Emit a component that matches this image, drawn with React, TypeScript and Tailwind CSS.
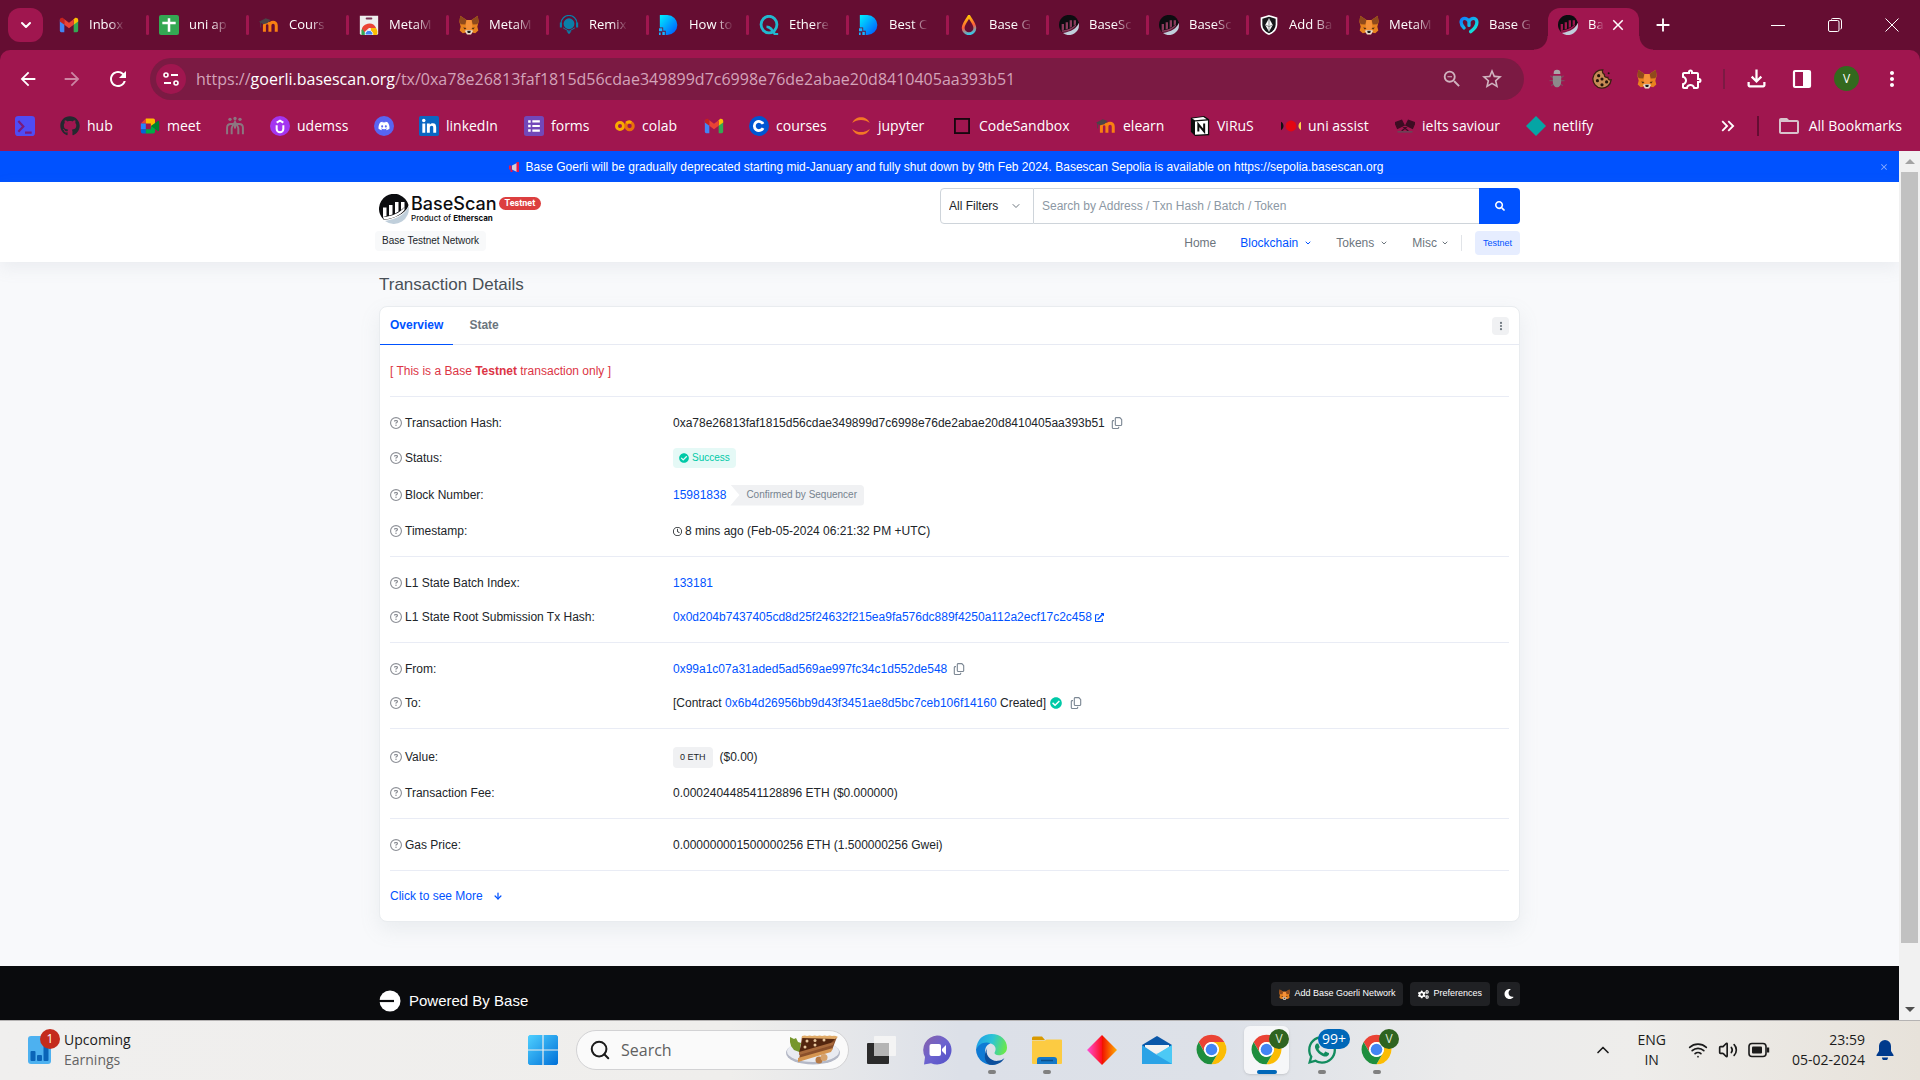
import type { ReactNode } from "react";
import { FaGithub, FaDiscord, FaCheckCircle, FaSearch, FaMoon, FaCogs, FaExternalLinkAlt, FaWhatsapp } from "react-icons/fa";
import { FaRegCircleQuestion, FaRegClock, FaRegCopy, FaEllipsisVertical } from "react-icons/fa6";
import { MdArrowBack, MdArrowForward, MdRefresh, MdStarBorder, MdOutlineExtension, MdMoreVert, MdOutlineFileDownload, MdZoomOut, MdKeyboardDoubleArrowRight, MdClose, MdAdd, MdFolderOpen } from "react-icons/md";
import { ArrowDown, ChevronDown, ChevronUp, Search, Wifi, Volume2 } from "lucide-react";

/* ---------- Logos ---------- */

function Svg({ children, box = "0 0 24 24", className = "size-5" }: { children: ReactNode; box?: string; className?: string }) {
  return (
    <svg viewBox={box} className={`shrink-0 ${className}`} fill="none" aria-hidden="true">
      {children}
    </svg>
  );
}

function Gmail() {
  return (
    <Svg className="size-5">
      <path d="M1 5.5V19a1.6 1.6 0 0 0 1.6 1.6H6.4V10.5z" fill="#4285f4" />
      <path d="M23 5.5V19a1.6 1.6 0 0 1-1.6 1.6h-3.8V10.5z" fill="#34a853" />
      <path d="M17.6 5.2v6.6L23 7.7V5.9c0-2.2-2.500-3.400-4.200-2.100z" fill="#fbbc04" />
      <path d="M1 5.900v1.800l5.400 4.100V5.200L5.200 3.800C3.500 2.500 1 3.700 1 5.900z" fill="#c5221f" />
      <path d="M6.400 11.800V5.200L12 9.400l5.600-4.200v6.600L12 16z" fill="#ea4335" />
    </Svg>
  );
}

function Sheets() {
  return (
    <Svg>
      <rect x="0" y="0" width="24" height="24" rx="2.500" fill="#34a853" />
      <path d="M12 4v16M4 9.500h16" stroke="#fff" strokeWidth="3" />
    </Svg>
  );
}

function Moodle() {
  return (
    <Svg>
      <path d="M6.500 20v-7.500a3.300 3.300 0 0 1 6.600 0V20M13.100 20v-7.500a3.800 3.800 0 0 1 7.600 0V20" stroke="#f98012" strokeWidth="3.600" />
      <path d="M0 8l8-4 6 2-4 4-5 1z" fill="#4b4448" />
      <path d="M2 8v7" stroke="#4b4448" />
    </Svg>
  );
}

function Chrome({ className = "size-5" }: { className?: string }) {
  return (
    <Svg className={className}>
      <circle cx="12" cy="12" r="11.500" fill="#fff" />
      <path d="M2.040 6.250A11.500 11.500 0 0 1 21.960 6.250H12A5.750 5.750 0 0 0 7.020 14.880z" fill="#ea4335" />
      <path d="M21.960 6.250A11.500 11.500 0 0 1 12 23.500L16.980 14.880A5.750 5.750 0 0 0 12 6.250z" fill="#fbbc04" />
      <path d="M12 23.500A11.500 11.500 0 0 1 2.040 6.250L7.020 14.880A5.750 5.750 0 0 0 16.980 14.880z" fill="#1e8e3e" />
      <circle cx="12" cy="12" r="5.600" fill="#fff" />
      <circle cx="12" cy="12" r="4.500" fill="#4285f4" />
    </Svg>
  );
}

function WebStore() {
  return (
    <Svg>
      <path d="M1 1h22v21a2 2 0 0 1-2 2H3a2 2 0 0 1-2-2z" fill="#eee" />
      <rect x="8" y="3" width="8" height="2.500" rx="1.200" fill="#7b3354" />
      <path d="M3 19a9.200 9.200 0 0 1 17.500-3.500H12L6 21z" fill="#ea4335" />
      <path d="M3 23a9 9 0 0 1 .8-6.500L9 24H3z" fill="#34a853" />
      <path d="M20.500 15.500a9 9 0 0 1 .8 8.500H15l-1-8.500z" fill="#fbbc04" />
      <path d="M7.500 24a4.600 4.600 0 1 1 9 0z" fill="#4285f4" stroke="#fff" />
    </Svg>
  );
}

function Fox({ className = "size-5" }: { className?: string }) {
  return (
    <Svg className={className}>
      <path d="M1.500 1l7.500 5h6l7.500-5 1 7-1.500 6 1.200 4.500-3.700 3.500-4-1-1.500 2h-4l-1.500-2-4 1-3.700-3.500L2 14 .5 8z" fill="#e8821e" />
      <path d="M1.500 1l7.500 5-1.500 5.500L2 11 .5 8zM22.500 1L15 6l1.500 5.500L22 11l1.500-3z" fill="#8f4a1c" />
      <path d="M9 6h6l1 8-1 5H9l-1-5z" fill="#f6923a" />
      <path d="M5 15l4 .5-2 2zM19 15l-4 .500 2 2z" fill="#4a2a14" />
      <path d="M7 19l3-1h4l3 1-2.500 4.500h-5z" fill="#e9dccf" />
      <path d="M9.800 19h4.400l-.7 2.500h-3z" fill="#1b1b1b" />
    </Svg>
  );
}

function Remix() {
  return (
    <Svg>
      <circle cx="12" cy="10.500" r="6.500" fill="#0a7ea8" />
      <path d="M2.500 14v-4a9.500 9.500 0 0 1 19 0v4" stroke="#0a7ea8" strokeWidth="1.400" />
      <path d="M1 9h2.500v6H1zM20.500 9H23v6h-2.500zM9 19.500h6L12 23z" fill="#0a7ea8" />
      <path d="M5 15.500l7 4 7-4" stroke="#0a7ea8" strokeWidth="1.200" />
    </Svg>
  );
}

function BrandD() {
  return (
    <Svg>
      <defs>
        <linearGradient id="brand-d" x1="0" y1="0" x2="1" y2="1">
          <stop offset="0" stopColor="#00f0ff" />
          <stop offset="1" stopColor="#0050ff" />
        </linearGradient>
      </defs>
      <path d="M1 0h9a12 12 0 0 1 0 24H8v-5H5v-4H1z" fill="url(#brand-d)" />
      <path d="M0 16h4v3.500H0zM4 20h3v4H4zM0 21h2v3H0z" fill="#19b4ff" />
    </Svg>
  );
}

function BrandQ() {
  return (
    <Svg>
      <ellipse cx="12" cy="11.500" rx="9.500" ry="10" stroke="#22b8cf" strokeWidth="3.400" />
      <path d="M9 14c5 0 7 4 10 9h4" stroke="#22b8cf" strokeWidth="3" />
    </Svg>
  );
}

function Drop() {
  return (
    <Svg>
      <defs>
        <linearGradient id="drop" x1="0.500" y1="0" x2="0.700" y2="1">
          <stop offset="0" stopColor="#ffc107" />
          <stop offset="0.550" stopColor="#ff5a3c" />
          <stop offset="1" stopColor="#35c7e8" />
        </linearGradient>
      </defs>
      <path d="M12 1.500c4 6.500 7 10 7 14a7 7 0 0 1-14 0c0-4 3-7.500 7-14z" stroke="url(#drop)" strokeWidth="3.400" />
    </Svg>
  );
}

function BaseScanMark({ className = "size-5", bar = "#fff", wave = "#c0cfdb" }: { className?: string; bar?: string; wave?: string }) {
  return (
    <Svg className={className} box="0 0 30 30">
      <path d="M5 26A15 15 0 1 1 29.500 11C29 16 20 24 5 26z" fill="#0c0d10" />
      <path d="M29.600 12A15 15 0 0 1 6 27C18 25 27 20 29.600 12z" fill={wave} />
      <path d="M4 23v-9.500h3.500V22zM10 21.500V11h3.500v9.500zM16 19.500V8h3.500v9.500zM22 16V8h3.500v5z" fill={bar} />
      <path d="M4 23c9-.5 17-4 21.500-10v3C21 21.500 13 25 5 25.500z" fill={bar} />
    </Svg>
  );
}

function Shield() {
  return (
    <Svg>
      <path d="M12 0l10 3v8c0 6-4 10.500-10 13C6 21.500 2 17 2 11V3z" fill="#fff" />
      <path d="M12 2l8 2.500V11c0 5-3 8.500-8 11-5-2.500-8-6-8-11V4.500z" fill="#17171a" />
      <path d="M12 4l4.500 8L12 20l-4.500-8z" fill="#fff" />
      <path d="M12 4v16M8 12l4 2 4-2" stroke="#777" />
    </Svg>
  );
}

function Heart() {
  return (
    <Svg>
      <defs>
        <linearGradient id="heart" x1="0" y1="0" x2="1" y2="1">
          <stop offset="0" stopColor="#0f7fff" />
          <stop offset="1" stopColor="#15f0d0" />
        </linearGradient>
      </defs>
      <path d="M6 15.500C2.500 12 2 9.500 2.800 7 4 3.200 9 2.800 12 7.500c3-4.700 8-4.300 9.200-.5 1.200 4.500-2.200 9-7.200 13M12 7.500v5" stroke="url(#heart)" strokeWidth="4" strokeLinecap="round" />
    </Svg>
  );
}

function Terminal() {
  return (
    <Svg>
      <rect width="24" height="24" rx="4" fill="#4f4cf5" />
      <path d="M4 6l6 6.500L4 19M12 20h8" stroke="#7a1a7c" strokeWidth="2.600" />
    </Svg>
  );
}

function Meet() {
  return (
    <Svg>
      <path d="M1 9l6-6v6z" fill="#ea4335" />
      <path d="M1 9h6v7H1z" fill="#2684fc" />
      <path d="M1 16h6v5H3a2 2 0 0 1-2-2z" fill="#0066da" />
      <path d="M7 3h9a2 2 0 0 1 2 2v5l-5 3V9H7z" fill="#ffba00" />
      <path d="M7 16h6v-3l5-3v9a2 2 0 0 1-2 2H7z" fill="#00ac47" />
      <path d="M13 12l8.500-6c.6-.5 1.500 0 1.500.800v10.400c0 .800-.900 1.300-1.500.800z" fill="#00832d" />
    </Svg>
  );
}

function People() {
  return (
    <Svg>
      <g fill="#8c7680">
        <circle cx="6" cy="4" r="2" />
        <circle cx="12" cy="3" r="2" />
        <circle cx="18" cy="4" r="2" />
      </g>
      <path d="M2.500 22v-8c0-3 2-4.500 4.500-4.500h10c2.500 0 4.500 1.500 4.500 4.500v8M8 22v-7c0-2 1.500-3 4-8 2.500 5 4 6 4 8v7M12 7v8" stroke="#8c7680" strokeWidth="2.400" />
    </Svg>
  );
}

function Udemy() {
  return (
    <Svg>
      <circle cx="12" cy="12" r="12" fill="#a435f0" />
      <path d="M8 11v4.500a4 4 0 0 0 8 0V11M8 8l4-2.500L16 8" stroke="#fff" strokeWidth="2.400" />
    </Svg>
  );
}

function Discord() {
  return (
    <span className="flex size-5 shrink-0 items-center justify-center rounded-full bg-[#5865f2] text-xs text-white">
      <FaDiscord />
    </span>
  );
}

function LinkedIn() {
  return (
    <Svg>
      <rect width="24" height="24" rx="2" fill="#0a66c2" />
      <path d="M4 9h3.500v11H4zM9.500 9H13v1.600c1-1.400 2.200-1.900 3.600-1.900 3 0 4 2 4 4.800V20h-3.500v-6c0-1.400-.5-2.300-1.800-2.300-1.500 0-2.300 1-2.300 2.500V20H9.500z" fill="#fff" />
      <circle cx="5.700" cy="5.500" r="2.100" fill="#fff" />
    </Svg>
  );
}

function Forms() {
  return (
    <Svg>
      <rect width="24" height="24" rx="3" fill="#7248b9" />
      <path d="M10 6.500h9M10 12h9M10 17.500h9" stroke="#fff" strokeWidth="2.600" />
      <path d="M5 6.500h3M5 12h3M5 17.500h3" stroke="#fff" strokeWidth="3" />
    </Svg>
  );
}

function Colab() {
  return (
    <Svg>
      <circle cx="6" cy="12" r="4.200" stroke="#f9ab00" strokeWidth="3.600" />
      <circle cx="17.500" cy="12" r="4.400" stroke="#e8710a" strokeWidth="3.600" />
      <path d="M13.500 8.500a5 5 0 0 1 6-.8" stroke="#f9ab00" strokeWidth="3.400" />
    </Svg>
  );
}

function Coursera() {
  return (
    <Svg>
      <circle cx="12" cy="12" r="12" fill="#0056d2" />
      <path d="M16.800 9.500a5.500 5.500 0 1 0 0 5" stroke="#fff" strokeWidth="3.400" />
    </Svg>
  );
}

function Jupyter() {
  return (
    <Svg>
      <path d="M1.500 8.500C5-1 19-1 22.500 8.500 17 3.500 7 3.500 1.500 8.500zM1.500 15.500C5 25 19 25 22.500 15.500 17 20.500 7 20.500 1.500 15.500z" fill="#f37726" />
    </Svg>
  );
}

function SquareOutline() {
  return (
    <Svg>
      <rect x="3.500" y="3.500" width="17" height="17" stroke="#16070e" strokeWidth="2.200" />
    </Svg>
  );
}

function Notion() {
  return (
    <Svg>
      <path d="M1 2l16-2 6 4v19L6 24l-5-5z" fill="#0d0d0d" />
      <path d="M2.500 3L16 1.300 20 4 6 5z" fill="#fff" />
      <path d="M6 6.500l15.500-1V21.500L6 22.500z" fill="#fff" />
      <path d="M10 18.500V10l7 8.500V9" stroke="#0d0d0d" strokeWidth="2.400" />
    </Svg>
  );
}

function UniAssist() {
  return (
    <Svg>
      <path d="M0 7c4 2 4 8 0 10z" fill="#111" />
      <circle cx="12" cy="12" r="6.500" fill="#e30613" />
      <path d="M24 7c-4 2-4 8 0 10z" fill="#ffd54a" />
    </Svg>
  );
}

function Flags() {
  return (
    <Svg>
      <path d="M0 8l8-3 3 6-8 4zM24 8l-8-3-3 6 8 4zM5 9l11 9M19 9L8 18" fill="#3d0d23" stroke="#3d0d23" strokeWidth="1.500" />
      <path d="M3 19h18" stroke="#6d4256" strokeWidth="2" />
    </Svg>
  );
}

function Netlify() {
  return (
    <Svg>
      <path d="M12 0l12 12-12 12L0 12z" fill="#05a5a5" />
    </Svg>
  );
}

function Bug() {
  return (
    <Svg>
      <path d="M4 8l4 3M20 8l-4 3M3 14h5M21 14h-5M5 20l4-3M19 20l-4-3" stroke="#7d4a61" strokeWidth="1.500" />
      <path d="M8 5a4 4 0 0 1 8 0v1H8z" fill="#a9a5a7" />
      <path d="M7 8h10v7c0 4-2 7-5 7s-5-3-5-7z" fill="#8d898b" />
    </Svg>
  );
}

function Cookie() {
  return (
    <Svg>
      <path d="M13 1a11 11 0 1 0 10 12c-2 .5-4-.5-4-3-3 .5-4.500-1-4-3.500C13 6 12 3.500 13 1z" fill="#c68a55" stroke="#3a2010" strokeWidth="1.500" />
      <g fill="#24130a">
        <circle cx="8" cy="8" r="1.900" />
        <circle cx="6.500" cy="14" r="1.900" />
        <circle cx="12" cy="12" r="1.900" />
        <circle cx="12" cy="19" r="1.900" />
        <circle cx="17.500" cy="15.500" r="1.900" />
        <circle cx="20" cy="5" r="1.200" />
      </g>
    </Svg>
  );
}

/* ---------- Browser ---------- */

const tabs: { icon: ReactNode; title: string }[] = [
  { icon: <Gmail />, title: "Inbox" },
  { icon: <Sheets />, title: "uni ap" },
  { icon: <Moodle />, title: "Cours" },
  { icon: <WebStore />, title: "MetaM" },
  { icon: <Fox />, title: "MetaM" },
  { icon: <Remix />, title: "Remix" },
  { icon: <BrandD />, title: "How to" },
  { icon: <BrandQ />, title: "Ethere" },
  { icon: <BrandD />, title: "Best C" },
  { icon: <Drop />, title: "Base G" },
  { icon: <BaseScanMark bar="#8b3a5c" />, title: "BaseSc" },
  { icon: <BaseScanMark bar="#8b3a5c" />, title: "BaseSc" },
  { icon: <Shield />, title: "Add Ba" },
  { icon: <Fox />, title: "MetaM" },
  { icon: <Heart />, title: "Base G" },
];

function TabStrip() {
  return (
    <div className="flex h-[50px] bg-[#650d32] pl-2 text-white">
      <button aria-label="Search tabs" className="mt-2 mr-1.5 flex h-[34px] w-[35px] shrink-0 items-center justify-center rounded-xl bg-[#a0164f]">
        <ChevronDown className="size-4" strokeWidth={3} />
      </button>
      {tabs.map((t, i) => (
        <button key={i} className="flex h-[50px] w-[100px] min-w-0 shrink items-center gap-2.5 pl-2.5">
          {t.icon}
          <span className="text-left text-[13px] whitespace-nowrap [mask-image:linear-gradient(to_right,black_60%,rgba(0,0,0,0.1))]">{t.title}</span>
          <span className={i < tabs.length - 1 ? "ml-auto h-5 w-[3px] shrink-0 rounded bg-[#a0164f]" : "hidden"} />
        </button>
      ))}
      <div className="relative mt-2 -ml-px flex w-[91px] shrink-0 items-center rounded-t-xl bg-[#a0164f] pb-2 pl-2.5">
        <span className="absolute bottom-0 -left-3.5 size-3.5 bg-[radial-gradient(circle_at_0_0,transparent_13px,#a0164f_14px)]" />
        <span className="absolute -right-3.5 bottom-0 size-3.5 bg-[radial-gradient(circle_at_100%_0,transparent_13px,#a0164f_14px)]" />
        <BaseScanMark bar="#a0164f" />
        <span className="ml-2.5 text-[13px] whitespace-nowrap [mask-image:linear-gradient(to_right,black_40%,transparent)]">Ba</span>
        <button aria-label="Close tab" className="mr-3 ml-auto"><MdClose className="size-[18px]" /></button>
      </div>
      <button aria-label="New tab" className="ml-3 flex h-[50px] w-6 items-center justify-center"><MdAdd className="size-[22px]" /></button>
      <div className="ml-auto flex">
        <button aria-label="Minimize" className="flex w-[57px] items-center justify-center"><span className="h-px w-3.5 bg-white" /></button>
        <button aria-label="Restore" className="flex w-[57px] items-center justify-center">
          <Svg box="0 0 14 14" className="size-3.5"><path d="M3.500 1.500a1 1 0 0 1 1-1H11A2.500 2.500 0 0 1 13.500 3v7a1 1 0 0 1-1 1" stroke="#fff" /><rect x=".5" y="2.500" width="10.500" height="11" rx="1.500" stroke="#fff" /></Svg>
        </button>
        <button aria-label="Close window" className="flex w-[57px] items-center justify-center">
          <Svg box="0 0 14 14" className="size-3.5"><path d="M.5.5l13 13M13.500.5l-13 13" stroke="#fff" /></Svg>
        </button>
      </div>
    </div>
  );
}

function Toolbar() {
  return (
    <div className="bg-[#650d32]">
      <div className="flex h-[57px] items-center rounded-t-[10px] bg-[#a0164f] pl-1.5 text-white">
        <button aria-label="Back" className="flex w-11 justify-center"><MdArrowBack className="size-[22px]" /></button>
        <button aria-label="Forward" className="flex w-11 justify-center text-[#cd85a3]"><MdArrowForward className="size-[22px]" /></button>
        <button aria-label="Reload" className="flex w-12 justify-center"><MdRefresh className="size-6" /></button>
        <div className="ml-2 flex h-[42px] flex-1 items-center rounded-full bg-[#7b1a43] pr-3 pl-1.5">
          <button aria-label="Site information" className="flex size-[30px] items-center justify-center rounded-full bg-[#a0164f]">
            <Svg box="0 0 18 18" className="size-[18px]">
              <path d="M9 5h7M2 13h7" stroke="#fff" strokeWidth="2" />
              <circle cx="4" cy="5" r="2" stroke="#fff" strokeWidth="1.600" />
              <circle cx="14" cy="13" r="2" stroke="#fff" strokeWidth="1.600" />
            </Svg>
          </button>
          <div role="textbox" aria-label="Address" className="ml-2.5 flex-1 truncate text-base text-[#d3a3b9]">
            https://<span className="text-white">goerli.basescan.org</span>/tx/0xa78e26813faf1815d56cdae349899d7c6998e76de2abae20d8410405aa393b51
          </div>
          <button aria-label="Zoom" className="flex w-10 justify-center text-[#d0b3bf]"><MdZoomOut className="size-[22px]" /></button>
          <button aria-label="Bookmark" className="flex w-10 justify-center text-[#d0b3bf]"><MdStarBorder className="size-6" /></button>
        </div>
        <div className="ml-2.5 flex items-center">
          <button aria-label="Debug extension" className="flex w-[45px] justify-center"><Bug /></button>
          <button aria-label="Cookies" className="flex w-[45px] justify-center"><Cookie /></button>
          <button aria-label="Wallet" className="flex w-[45px] justify-center"><Fox /></button>
          <button aria-label="Extensions" className="flex w-[46px] justify-center"><MdOutlineExtension className="size-6" /></button>
          <span className="mx-2 h-5 w-0.5 bg-[#7b1a43]" />
          <button aria-label="Downloads" className="flex w-[46px] justify-center"><MdOutlineFileDownload className="size-[27px]" /></button>
          <button aria-label="Side panel" className="flex w-[45px] justify-center">
            <Svg box="0 0 20 20" className="size-5"><rect x="2" y="2" width="16" height="16" rx="1" stroke="#fff" strokeWidth="2.200" /><path d="M11 2h7v16h-7z" fill="#fff" /></Svg>
          </button>
          <button aria-label="Profile" className="flex w-[45px] justify-center"><span className="flex size-[25px] items-center justify-center rounded-full bg-[#33691e] text-xs">V</span></button>
          <button aria-label="Menu" className="flex w-[45px] justify-center"><MdMoreVert className="size-6" /></button>
          <span className="w-1.5" />
        </div>
      </div>
    </div>
  );
}

const bookmarks: { icon: ReactNode; label: string; w: string }[] = [
  { icon: <Terminal />, label: "", w: "w-[45px]" },
  { icon: <FaGithub className="size-5 shrink-0 text-[#24292f]" />, label: "hub", w: "w-[80px]" },
  { icon: <Meet />, label: "meet", w: "w-[85px]" },
  { icon: <People />, label: "", w: "w-[45px]" },
  { icon: <Udemy />, label: "udemss", w: "w-[104px]" },
  { icon: <Discord />, label: "", w: "w-[45px]" },
  { icon: <LinkedIn />, label: "linkedIn", w: "w-[105px]" },
  { icon: <Forms />, label: "forms", w: "w-[91px]" },
  { icon: <Colab />, label: "colab", w: "w-[89px]" },
  { icon: <Gmail />, label: "", w: "w-[45px]" },
  { icon: <Coursera />, label: "courses", w: "w-[102px]" },
  { icon: <Jupyter />, label: "jupyter", w: "w-[101px]" },
  { icon: <SquareOutline />, label: "CodeSandbox", w: "w-[144px]" },
  { icon: <Moodle />, label: "elearn", w: "w-[94px]" },
  { icon: <Notion />, label: "ViRuS", w: "w-[91px]" },
  { icon: <UniAssist />, label: "uni assist", w: "w-[114px]" },
  { icon: <Flags />, label: "ielts saviour", w: "w-[131px]" },
  { icon: <Netlify />, label: "netlify", w: "w-[80px]" },
];

function Bookmarks() {
  return (
    <nav aria-label="Bookmarks" className="flex h-11 items-center bg-[#a0164f] pb-1.5 pl-[15px] text-sm text-white">
      {bookmarks.map((b, i) => (
        <a key={i} href="#" aria-label={b.label || "Bookmark"} className={`flex shrink-0 items-center gap-[7px] whitespace-nowrap ${b.w}`}>
          {b.icon}
          {b.label}
        </a>
      ))}
      <button aria-label="More bookmarks" className="ml-auto"><MdKeyboardDoubleArrowRight className="size-[22px]" /></button>
      <span className="mx-[18px] h-5 w-0.5 bg-[#650d32]" />
      <button className="mr-[18px] flex items-center gap-2 whitespace-nowrap"><MdFolderOpen className="size-6 text-[#d8c3cc]" />All Bookmarks</button>
    </nav>
  );
}

/* ---------- Site ---------- */

const container = "mx-auto w-full max-w-[1141px]";

function Header() {
  return (
    <header className="bg-white shadow-[0_6px_16px_rgba(140,152,164,0.12)]">
      <div className={`flex justify-between pt-1.5 pb-[7px] ${container}`}>
        <div className="pt-1.5">
          <a href="#" className="flex items-start">
            <BaseScanMark className="size-[30px]" />
            <span className="ml-0.5 flex flex-col text-[#0c0d10]">
              <span className="font-[Inter] text-lg leading-[19px] font-medium">BaseScan</span>
              <span className="font-[Inter] text-[8px] leading-[10px] font-medium">Product of <b>Etherscan</b></span>
            </span>
            <span className="mt-[3px] ml-0.5 rounded-full bg-[#dc3f3f] px-1.5 font-[Roboto] text-[9px] leading-[13px] font-bold text-white">Testnet</span>
          </a>
          <span className="mt-[7px] -ml-1 inline-block rounded bg-[#f8f9fa] px-[7px] text-[10px] leading-5 text-[#212529]">Base Testnet Network</span>
        </div>
        <div className="w-[580px]">
          <form className="flex h-9" onSubmit={(e) => e.preventDefault()}>
            <div className="relative">
              <select aria-label="Filter" className="h-9 w-[94px] appearance-none rounded-l border border-[#ced4da] bg-white pl-2 text-xs text-[#212529]">
                <option>All Filters</option>
              </select>
              <ChevronDown className="pointer-events-none absolute top-3 right-3 size-3 text-[#6c757d]" />
            </div>
            <input aria-label="Search" placeholder="Search by Address / Txn Hash / Batch / Token" className="min-w-0 flex-1 border-y border-[#ced4da] bg-white px-2 text-xs placeholder:text-[#8c98a4]" />
            <button aria-label="Submit search" className="flex w-[41px] items-center justify-center rounded-r bg-[#0052ff] text-white"><FaSearch className="size-2.5" /></button>
          </form>
          <nav className="mt-[7px] flex h-6 items-center justify-end text-xs text-[#6c757d]">
            <a href="#">Home</a>
            <a href="#" className="ml-6 flex items-center gap-1.5 text-[#0052ff]">Blockchain<ChevronDown className="size-2" strokeWidth={3} /></a>
            <a href="#" className="ml-6 flex items-center gap-1.5">Tokens<ChevronDown className="size-2" strokeWidth={3} /></a>
            <a href="#" className="ml-6 flex items-center gap-1">Misc<ChevronDown className="size-2" strokeWidth={3} /></a>
            <span className="ml-3 h-4 w-px bg-[#e1e4e8]" />
            <a href="#" className="ml-[13px] rounded bg-[#e6edff] px-2 text-[9px] leading-6 text-[#0052ff]">Testnet</a>
          </nav>
        </div>
      </div>
    </header>
  );
}

function Row({ label, children, tall = false }: { label: string; children: ReactNode; tall?: boolean }) {
  return (
    <div className={`grid grid-cols-[283px_1fr] items-center ${tall ? "min-h-[38px]" : "min-h-[34px]"}`}>
      <dt className="flex items-center gap-[3px]"><FaRegCircleQuestion className="size-3 text-[#8c8f96]" />{label}</dt>
      <dd className="flex items-center">{children}</dd>
    </div>
  );
}

function Group({ children }: { children: ReactNode }) {
  return <dl className="border-t border-[#e9ecf5] pt-[9px] pb-2">{children}</dl>;
}

function Copy() {
  return <button aria-label="Copy" className="ml-1.5 text-[#7d8894]"><FaRegCopy className="size-3" /></button>;
}

const link = "text-[#0052ff]";

function Details() {
  return (
    <main className={container}>
      <h1 className="pt-3 pb-2.5 text-[17px] leading-[22px] text-[#495057]">Transaction Details</h1>
      <section className="rounded-lg border border-[#e9ecef] bg-white text-xs leading-[18px] text-[#212529] shadow-[0_8px_20px_rgba(140,152,164,0.13)]">
        <div className="flex h-[38px] items-center border-b border-[#e7eaf3] pr-2.5 font-bold">
          <button className="-mb-px h-[38px] border-b border-[#0052ff] px-2.5 pb-0.5 text-[#0052ff]">Overview</button>
          <button className="ml-1.5 h-[38px] px-2.5 pb-0.5 text-[#6c757d]">State</button>
          <button aria-label="More options" className="ml-auto flex h-[18px] w-[17px] items-center justify-center rounded-sm bg-[#f0f1f3] text-[#6c757d]"><FaEllipsisVertical className="size-2.5" /></button>
        </div>
        <div className="px-2.5">
          <p className="pt-[17px] pb-4 text-[#dc3545]">[ This is a Base <b>Testnet</b> transaction only ]</p>
          <Group>
            <Row label="Transaction Hash:">0xa78e26813faf1815d56cdae349899d7c6998e76de2abae20d8410405aa393b51<Copy /></Row>
            <div className="py-px">
              <Row label="Status:"><span className="flex h-5 items-center gap-[3px] rounded bg-[#e5f9f6] px-1.5 text-[10px] text-[#00c9a7]"><FaCheckCircle className="size-2.5" />Success</span></Row>
            </div>
            <Row label="Block Number:" tall>
              <a href="#" className={link}>15981838</a>
              <span className="ml-1 flex h-[21px] items-center rounded-r bg-[#f0f1f3] pr-[7px] pl-4 text-[10px] text-[#77838f] [clip-path:polygon(0_0,100%_0,100%_100%,0_100%,9px_50%)]">Confirmed by Sequencer</span>
            </Row>
            <Row label="Timestamp:"><FaRegClock className="mr-[3px] size-[9px]" />8 mins ago (Feb-05-2024 06:21:32 PM +UTC)</Row>
          </Group>
          <Group>
            <Row label="L1 State Batch Index:"><a href="#" className={link}>133181</a></Row>
            <Row label="L1 State Root Submission Tx Hash:">
              <a href="#" className={`flex items-center gap-[3px] ${link}`}>0x0d204b7437405cd8d25f24632f215ea9fa576dc889f4250a112a2ecf17c2c458<FaExternalLinkAlt className="size-[9px]" /></a>
            </Row>
          </Group>
          <Group>
            <Row label="From:"><a href="#" className={link}>0x99a1c07a31aded5ad569ae997fc34c1d552de548</a><Copy /></Row>
            <Row label="To:">
              [Contract&nbsp;<a href="#" className={link}>0x6b4d26956bb9d43f3451ae8d5bc7ceb106f14160</a>&nbsp;Created]<FaCheckCircle className="mr-0.5 ml-1 size-3 text-[#00c9a7]" /><Copy />
            </Row>
          </Group>
          <Group>
            <Row label="Value:" tall><span className="mr-[7px] rounded bg-[#f0f1f3] px-[7px] text-[9px] leading-[21px]">0 ETH</span>($0.00)</Row>
            <Row label="Transaction Fee:">0.000240448541128896 ETH ($0.000000)</Row>
          </Group>
          <Group>
            <Row label="Gas Price:">0.000000001500000256 ETH (1.500000256 Gwei)</Row>
          </Group>
          <div className="border-t border-[#e9ecf5] py-4">
            <a href="#" className={`flex items-center gap-2.5 ${link}`}>Click to see More<ArrowDown className="size-2.5" strokeWidth={3} /></a>
          </div>
        </div>
      </section>
    </main>
  );
}

function Footer() {
  return (
    <footer className="mt-11 h-[90px] shrink-0 bg-[#0a0b0d] text-white">
      <div className={`flex items-start justify-between pt-4 ${container}`}>
        <div className="flex items-center gap-2 pt-2 text-[15px] leading-[18px]">
          <Svg box="0 0 22 22" className="size-[22px]"><circle cx="11" cy="11" r="10.500" fill="#fff" /><path d="M0 11h15" stroke="#0a0b0d" strokeWidth="2.200" /></Svg>
          Powered By Base
        </div>
        <div className="flex gap-[7px] text-[9px]">
          <button className="flex h-6 items-center gap-1 rounded bg-[#202124] px-2"><Fox className="size-[11px]" />Add Base Goerli Network</button>
          <button className="flex h-6 items-center gap-1 rounded bg-[#202124] px-2"><FaCogs className="size-[11px]" />Preferences</button>
          <button aria-label="Dark mode" className="flex h-6 w-[23px] items-center justify-center rounded bg-[#202124]"><FaMoon className="size-2.5" /></button>
        </div>
      </div>
    </footer>
  );
}

function Site() {
  return (
    <div className="flex min-h-0 flex-1 font-['Liberation_Sans',Arial,sans-serif]">
      <div className="min-w-0 flex-1 overflow-hidden bg-[#f8f9fb]">
        <div className="flex h-[31px] items-center bg-[#0052ff] pr-2.5 pl-3 text-xs text-white">
          <div className="flex flex-1 items-center justify-center gap-1.5">
            <Svg box="0 0 12 12" className="size-3"><path d="M1 4.500h2.500v4H1zM2.500 8.500h2V11h-2z" fill="#e8174b" /><path d="M4 4.500L9 2v9L4 8.500z" fill="#d6ced8" /><path d="M8.500 1H11v10H8.500z" fill="#e8174b" /></Svg>
            Base Goerli will be gradually deprecated starting mid-January and fully shut down by 9th Feb 2024. Basescan Sepolia is available on https://sepolia.basescan.org
          </div>
          <button aria-label="Dismiss"><MdClose className="size-2.5 text-[#8fb0ff]" /></button>
        </div>
        <Header />
        <Details />
        <Footer />
      </div>
      <div aria-hidden="true" className="flex w-[21px] flex-col items-center bg-[#f1f1f1] py-2">
        <span className="border-x-[5px] border-b-[5px] border-x-transparent border-b-[#a3a3a3]" />
        <span className="mt-2 h-[771px] w-[17px] bg-[#c1c1c1]" />
        <span className="mt-auto border-x-[5px] border-t-[5px] border-x-transparent border-t-[#505050]" />
      </div>
    </div>
  );
}

/* ---------- Taskbar ---------- */

function TaskButton({ label, children, mark = "", active = false }: { label: string; children: ReactNode; mark?: string; active?: boolean }) {
  return (
    <button aria-label={label} className={`relative flex h-12 w-[45px] items-center justify-center rounded-md ${active ? "bg-white/70 shadow-sm" : ""}`}>
      {children}
      {mark && <span className={`absolute bottom-0 h-1 rounded-full ${mark}`} />}
    </button>
  );
}

function Badge() {
  return <span className="absolute top-[3px] right-0 flex size-5 items-center justify-center rounded-full bg-[#2f6420] text-xs text-[#dfe8d8]">V</span>;
}

function Cake() {
  return (
    <Svg box="0 0 54 30" className="h-[30px] w-[54px]">
      <ellipse cx="27" cy="18" rx="27" ry="11.500" fill="#b4b8c6" />
      <ellipse cx="27" cy="16.500" rx="26" ry="10.500" fill="#e9ebf1" />
      <path d="M4 2l4 2 2-1 2 4 3 1-1 5 2 5-8-3-3-4-1-4z" fill="#76962d" />
      <path d="M16 1l35 1-5 13-33 11z" fill="#8a4f2a" />
      <path d="M17 2l33 1-7 7-30 8z" fill="#54260f" />
      <path d="M13 17l35-10-1 3-34 10z" fill="#a96a3c" />
      <path d="M12 23l35-10-2 4-33 10z" fill="#d59550" />
      <path d="M16 1q3-1 5 0 3-1 5 0 3-1 5 0 3-1 5 0 3-1 5 0 3-1 5 0 3-1 6 1l-3 2-33-1z" fill="#e0aa68" />
      <g fill="#e9c9a0"><circle cx="21" cy="6" r="1.500" /><circle cx="29" cy="5.500" r="1.500" /><circle cx="38" cy="5" r="1.500" /><circle cx="19" cy="12" r="1.500" /><circle cx="29" cy="10" r="1.500" /></g>
      <circle cx="33" cy="25" r="3.500" fill="#b77943" /><circle cx="38" cy="22.500" r="3.500" fill="#d6a26b" />
    </Svg>
  );
}

function Taskbar() {
  return (
    <footer className="flex h-[60px] shrink-0 items-center border-t border-[#b5b3b3] bg-[linear-gradient(90deg,#f0efee_0%,#efeeec_38%,#dce0e8_50%,#dde1e8_64%,#ebebeb_76%,#eeedeb_85%,#e7e2da_100%)] pb-0.5 text-[#1b1b1b]">
      <button className="ml-7 flex items-center gap-3 text-left text-sm leading-5">
        <span className="relative">
          <Svg box="0 0 24 28" className="h-7 w-6"><rect width="23" height="28" rx="3" fill="#4db1f0" /><rect x="2.500" y="15" width="5" height="10" rx="1" fill="#0a64b8" /><rect x="9" y="19" width="5" height="6" rx="1" fill="#0a64b8" /><rect x="15.500" y="9" width="5" height="16" rx="1" fill="#0a64b8" /></Svg>
          <span className="absolute -top-[7px] -right-2 flex size-5 items-center justify-center rounded-full bg-[#c42b1c] text-xs text-white">1</span>
        </span>
        <span className="flex flex-col"><span>Upcoming</span><span className="text-[#636363]">Earnings</span></span>
      </button>
      <div className="flex flex-1 items-center justify-center pr-[59px] pl-[262px]">
        <button aria-label="Start" className="mr-[18px]">
          <Svg box="0 0 30 30" className="size-[30px]">
            <defs><linearGradient id="win" x1="0" y1="0" x2="1" y2="1"><stop offset="0" stopColor="#4fd0ff" /><stop offset="1" stopColor="#0070d8" /></linearGradient></defs>
            <path d="M1.500 0H14.400v14.400H0V1.500zM15.600 0h12.900L30 1.500v12.900H15.600zM0 15.600h14.400V30H1.500L0 28.500zM15.600 15.600H30v12.900L28.500 30H15.600z" fill="url(#win)" />
          </Svg>
        </button>
        <label className="flex h-10 w-[273px] items-center rounded-full border border-[#d2d2d4] bg-[#fafafa] pr-2 pl-3">
          <Search className="size-[22px] shrink-0" strokeWidth={2.2} />
          <input placeholder="Search" aria-label="Search" className="ml-2.5 min-w-0 flex-1 bg-transparent text-base outline-none placeholder:text-[#606060]" />
          <Cake />
        </label>
        <div className="ml-2.5 flex gap-2.5">
          <TaskButton label="Task view">
            <Svg box="0 0 30 30" className="size-[30px]"><rect x="0" y="8" width="22" height="21" rx="1" fill="#2b2b2b" /><rect x="7" y="1" width="22" height="20" rx="1" fill="#f4f4f4" /><path d="M7 8h15v13H7z" fill="#b4b4b4" /></Svg>
          </TaskButton>
          <TaskButton label="Chat">
            <Svg box="0 0 30 30" className="size-[30px]">
              <defs><linearGradient id="chat" x1="0" y1="0" x2="1" y2="1"><stop offset="0" stopColor="#8a62a8" /><stop offset=".5" stopColor="#6c63cf" /><stop offset="1" stopColor="#5250c8" /></linearGradient></defs>
              <path d="M15 .5a14.500 14.500 0 1 1-6 27.700L2 29.500l1-7.500A14.500 14.500 0 0 1 15 .5z" fill="url(#chat)" />
              <rect x="7.500" y="9" width="11.500" height="12" rx="2" fill="#fff" /><path d="M20 14l4-4v10l-4-4z" fill="#fff" />
            </Svg>
          </TaskButton>
          <TaskButton label="Edge" mark="w-2 bg-[#808080]">
            <Svg box="0 0 30 30" className="size-[31px]">
              <defs>
                <linearGradient id="edge-a" x1="0" y1=".3" x2="1" y2=".5"><stop offset="0" stopColor="#1f9fe8" /><stop offset=".5" stopColor="#2cc4d6" /><stop offset="1" stopColor="#6ae84a" /></linearGradient>
              </defs>
              <path d="M0 15C1 5 7 0 15 0c9 0 15 6 15 13 0 5-4 7.500-8 7.500-3 0-4.500-1-4-2.500 2-3 1-7-3-8.500C9 8 3 10 0 15z" fill="url(#edge-a)" />
              <path d="M0 15c2-5.500 9-8.500 14-6-5 2-6 7-4.500 11.500C11 26 16 29 20 29A15 15 0 0 1 0 15z" fill="#0f7ad4" />
              <path d="M11 13c-3 7 3 13.500 10 13 3 0 5-1.500 6.500-2.500C25 28 20 30 16 30 9 30 6 22 11 13z" fill="#0c4f9c" />
            </Svg>
          </TaskButton>
          <TaskButton label="File Explorer" mark="w-2 bg-[#808080]">
            <Svg box="0 0 30 30" className="size-[30px]"><path d="M0 3a1.500 1.500 0 0 1 1.500-1.500H10L13 5H0z" fill="#d99a00" /><path d="M0 5.500h13l1.500-1H29a1 1 0 0 1 1 1V28a1 1 0 0 1-1 1H1a1 1 0 0 1-1-1z" fill="#fccb42" /><path d="M5 29v-4a3 3 0 0 1 3-3h14a3 3 0 0 1 3 3v4z" fill="#1478c8" /><path d="M9 25.500h12" stroke="#0b4f8a" strokeWidth="1.500" /></Svg>
          </TaskButton>
          <TaskButton label="Diamond">
            <Svg box="0 0 30 30" className="size-[30px]"><defs><linearGradient id="dia"><stop offset="0" stopColor="#ff4fd8" /><stop offset=".49" stopColor="#ff1020" /><stop offset=".5" stopColor="#f01000" /><stop offset="1" stopColor="#ffae00" /></linearGradient></defs><path d="M15 0l15 15-15 15L0 15z" fill="url(#dia)" /></Svg>
          </TaskButton>
          <TaskButton label="Mail">
            <Svg box="0 0 30 30" className="size-[30px]"><path d="M0 10L15 1l15 9v4H0z" fill="#0a57a8" /><path d="M3 10h24v8H3z" fill="#f2f2f2" /><path d="M0 10l15 10 15-10v19H0z" fill="#2ba3e6" /><path d="M30 10L14 19.500 30 29z" fill="#4cc9f5" /></Svg>
          </TaskButton>
          <TaskButton label="Chrome"><Chrome className="size-[31px]" /></TaskButton>
          <TaskButton label="Chrome profile" mark="w-5 bg-[#0067b8]" active><Chrome className="size-[31px]" /><Badge /></TaskButton>
          <TaskButton label="WhatsApp" mark="w-2 bg-[#808080]">
            <FaWhatsapp className="size-8 text-[#128c5e]" />
            <span className="absolute top-[3px] -right-1.5 flex h-5 items-center rounded-full bg-[#0067b8] px-1 text-sm text-white">99+</span>
          </TaskButton>
          <TaskButton label="Chrome second profile" mark="w-2 bg-[#808080]"><Chrome className="size-[31px]" /><Badge /></TaskButton>
        </div>
      </div>
      <div className="flex items-center text-sm leading-5">
        <button aria-label="Hidden icons"><ChevronUp className="size-5" /></button>
        <button className="ml-6 text-center">ENG<br />IN</button>
        <button aria-label="Network, volume and battery" className="ml-[22px] flex items-center gap-2.5">
          <Wifi className="size-5" /><Volume2 className="size-5" />
          <Svg box="0 0 22 16" className="h-4 w-[22px]"><rect x="1" y="1.500" width="17" height="13" rx="3" stroke="#1b1b1b" strokeWidth="1.600" /><rect x="4" y="4.500" width="10" height="7" rx="1" fill="#1b1b1b" /><path d="M20 5.500v5" stroke="#1b1b1b" strokeWidth="2.400" /></Svg>
        </button>
        <button className="ml-[22px] text-right">23:59<br />05-02-2024</button>
        <button aria-label="Notifications" className="mr-[26px] ml-[11px]">
          <Svg box="0 0 18 20" className="h-5 w-[18px]"><path d="M9 0a6 6 0 0 1 6 6v5l2.500 4v1H.5v-1L3 11V6a6 6 0 0 1 6-6zM6 17.500h6a3 3 0 0 1-6 0z" fill="#003a8c" /></Svg>
        </button>
      </div>
    </footer>
  );
}

export default function App() {
  return (
    <div className="flex h-screen flex-col overflow-hidden font-['Open_Sans','Noto_Sans',sans-serif]">
      <TabStrip />
      <Toolbar />
      <Bookmarks />
      <Site />
      <Taskbar />
    </div>
  );
}
